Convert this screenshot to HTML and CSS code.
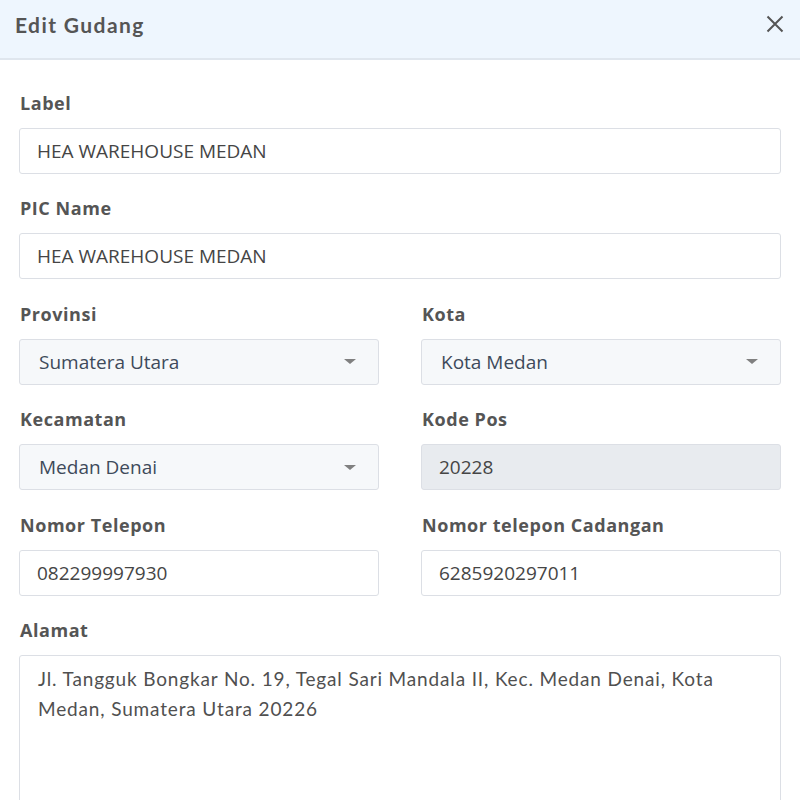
FILE: index.html
```html
<!DOCTYPE html>
<html>
<head>
<meta charset="utf-8">
<link rel="stylesheet" href="styles.css">
</head>
<body>
<div class="modal">
  <div class="modal-header">
    <h1 class="title">Edit Gudang</h1>
    <button class="close" aria-label="close">
      <svg width="18" height="18" viewBox="0 0 18 18"><path d="M1.5 1.5 L16.5 16.5 M16.5 1.5 L1.5 16.5" stroke="#555" stroke-width="2" fill="none"/></svg>
    </button>
  </div>
  <div class="modal-body">
    <div class="field">
      <label class="label">Label</label>
      <div class="input">HEA WAREHOUSE MEDAN</div>
    </div>
    <div class="field">
      <label class="label">PIC Name</label>
      <div class="input">HEA WAREHOUSE MEDAN</div>
    </div>
    <div class="row">
      <div class="field">
        <label class="label">Provinsi</label>
        <div class="input select"><span>Sumatera Utara</span><i class="caret"></i></div>
      </div>
      <div class="field">
        <label class="label">Kota</label>
        <div class="input select"><span>Kota Medan</span><i class="caret"></i></div>
      </div>
    </div>
    <div class="row">
      <div class="field">
        <label class="label">Kecamatan</label>
        <div class="input select"><span>Medan Denai</span><i class="caret"></i></div>
      </div>
      <div class="field">
        <label class="label">Kode Pos</label>
        <div class="input disabled">20228</div>
      </div>
    </div>
    <div class="row">
      <div class="field">
        <label class="label">Nomor Telepon</label>
        <div class="input">082299997930</div>
      </div>
      <div class="field">
        <label class="label">Nomor telepon Cadangan</label>
        <div class="input">6285920297011</div>
      </div>
    </div>
    <div class="field">
      <label class="label">Alamat</label>
      <div class="textarea">Jl. Tangguk Bongkar No. 19, Tegal Sari Mandala II, Kec. Medan Denai, Kota Medan, Sumatera Utara 20226</div>
    </div>
  </div>
</div>
</body>
</html>
```

FILE: styles.css
```css
* { box-sizing: border-box; }
html, body { margin: 0; padding: 0; background: #fff; }
body { font-family: "Open Sans", "Noto Sans", sans-serif; color: #444; }

.modal { width: 800px; height: 800px; overflow: hidden; }

.modal-header {
  height: 60px;
  background: #eef6fe;
  border-bottom: 2px solid #dfe6ee;
  display: flex;
  align-items: center;
  justify-content: space-between;
  padding: 0 16px 10px 15px;
}
.title {
  margin: 0;
  font-family: Lato, "Open Sans", sans-serif;
  font-weight: 700;
  font-size: 21px;
  color: #555;
  letter-spacing: 1.4px;
}
.close {
  border: 0;
  background: none;
  padding: 0;
  width: 18px;
  height: 18px;
  display: flex;
}

.modal-body {
  padding: 32px 19px 0 19px;
  display: flex;
  flex-direction: column;
  gap: 23.4px;
}

.row {
  display: grid;
  grid-template-columns: 1fr 1fr;
  gap: 42px;
}

.field { display: flex; flex-direction: column; gap: 14px; }

.label {
  font-size: 18px;
  font-weight: 700;
  color: #555;
  line-height: 22px;
  padding-left: 1px;
  letter-spacing: 0.55px;
}

.input {
  height: 46px;
  border: 1px solid #dcdfe5;
  border-radius: 3px;
  background: #fff;
  display: flex;
  align-items: center;
  padding: 0 17px;
  font-size: 19px;
  color: #454545;
}
.select {
  background: #f6f8fa;
  justify-content: space-between;
  padding: 0 22px 0 19px;
  color: #3e4a5a;
}
.caret {
  width: 0; height: 0;
  border-left: 6px solid transparent;
  border-right: 6px solid transparent;
  border-top: 5px solid #808080;
}
.disabled { background: #e8ebef; }

.textarea {
  height: 200px;
  border: 1px solid #dcdfe5;
  border-radius: 3px;
  padding: 8px 18px;
  font-family: Lato, sans-serif;
  font-size: 19px;
  line-height: 30px;
  color: #505050;
  letter-spacing: 0.85px;
}
```
